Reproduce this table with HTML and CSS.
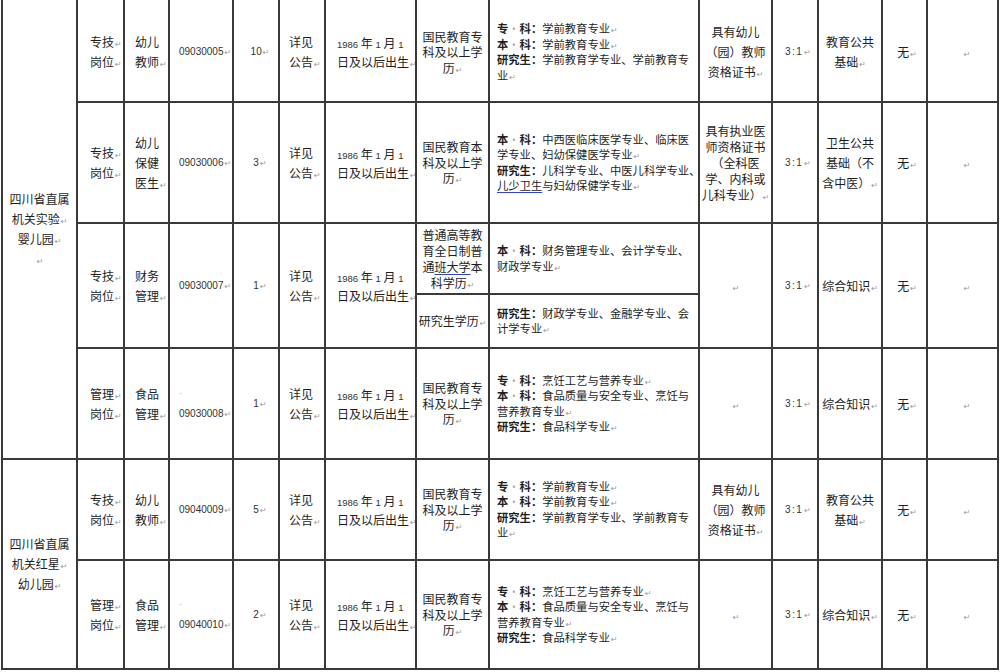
FILE: index.html
```html
<!DOCTYPE html>
<html lang="zh-CN">
<head>
<meta charset="utf-8">
<title>岗位表</title>
<link rel="stylesheet" href="styles.css">
</head>
<body>
<table class="jobs">
<colgroup>
<col class="w-unit"><col class="w-type"><col class="w-name"><col class="w-code"><col class="w-num"><col class="w-cond"><col class="w-age"><col class="w-edu"><col class="w-major"><col class="w-cert"><col class="w-ratio"><col class="w-exam"><col class="w-other"><col class="w-note">
</colgroup>
<tbody>
<tr class="r1">
<td rowspan="5" class="unit">四川省直属<br>机关实验<span class="p">↵</span><br>婴儿园<span class="p">↵</span><br><span class="p">↵</span></td>
<td class="type">专技<span class="p">↵</span><br>岗位<span class="p">↵</span></td>
<td class="name">幼儿<br>教师<span class="p">↵</span></td>
<td class="code">09030005<span class="p">↵</span></td>
<td class="num">10<span class="p">↵</span></td>
<td class="cond">详见<br>公告<span class="p">↵</span></td>
<td class="age"><span class="n">1986</span> 年 <span class="n">1</span> 月 <span class="n">1</span><br>日及以后出生<span class="p">↵</span></td>
<td class="edu">国民教育专<br>科及以上学<br>历<span class="p">↵</span></td>
<td class="major"><b>专<span class="sp">·</span>科：</b>学前教育专业<span class="p">↵</span><br><b>本<span class="sp">·</span>科：</b>学前教育专业<span class="p">↵</span><br><b>研究生：</b>学前教育学专业、学前教育专<br>业<span class="p">↵</span></td>
<td class="cert">具有幼儿<br>（园）教师<br>资格证书<span class="p">↵</span></td>
<td class="ratio">3:1<span class="p">↵</span></td>
<td class="exam">教育公共<br>基础<span class="p">↵</span></td>
<td class="other">无<span class="p">↵</span></td>
<td class="note"><span class="p">↵</span></td>
</tr>
<tr class="r2">
<td class="type">专技<span class="p">↵</span><br>岗位<span class="p">↵</span></td>
<td class="name">幼儿<br>保健<br>医生<span class="p">↵</span></td>
<td class="code">09030006<span class="p">↵</span></td>
<td class="num">3<span class="p">↵</span></td>
<td class="cond">详见<br>公告<span class="p">↵</span></td>
<td class="age"><span class="n">1986</span> 年 <span class="n">1</span> 月 <span class="n">1</span><br>日及以后出生<span class="p">↵</span></td>
<td class="edu">国民教育本<br>科及以上学<br>历<span class="p">↵</span></td>
<td class="major"><b>本<span class="sp">·</span>科：</b>中西医临床医学专业、临床医<br>学专业、妇幼保健医学专业<span class="p">↵</span><br><b>研究生：</b>儿科学专业、中医儿科学专业、<br><span class="gm">儿少卫生</span>与妇幼保健学专业<span class="p">↵</span></td>
<td class="cert tight">具有执业医<br>师资格证书<br>（全科医<br>学、内科或<br>儿科专业）<span class="p">↵</span></td>
<td class="ratio">3:1<span class="p">↵</span></td>
<td class="exam">卫生公共<br>基础（不<br>含中医）<span class="p">↵</span></td>
<td class="other">无<span class="p">↵</span></td>
<td class="note"><span class="p">↵</span></td>
</tr>
<tr class="r3a">
<td rowspan="2" class="type">专技<span class="p">↵</span><br>岗位<span class="p">↵</span></td>
<td rowspan="2" class="name">财务<br>管理<span class="p">↵</span></td>
<td rowspan="2" class="code">09030007<span class="p">↵</span></td>
<td rowspan="2" class="num">1<span class="p">↵</span></td>
<td rowspan="2" class="cond">详见<br>公告<span class="p">↵</span></td>
<td rowspan="2" class="age"><span class="n">1986</span> 年 <span class="n">1</span> 月 <span class="n">1</span><br>日及以后出生<span class="p">↵</span></td>
<td class="edu tight">普通高等教<br>育全日制普<br>通<span class="gm">班大学</span>本<br>科学历<span class="p">↵</span></td>
<td class="major"><b>本<span class="sp">·</span>科：</b>财务管理专业、会计学专业、<br>财政学专业<span class="p">↵</span></td>
<td rowspan="2" class="cert"><span class="p">↵</span></td>
<td rowspan="2" class="ratio">3:1<span class="p">↵</span></td>
<td rowspan="2" class="exam">综合知识<span class="p">↵</span></td>
<td rowspan="2" class="other">无<span class="p">↵</span></td>
<td rowspan="2" class="note"><span class="p">↵</span></td>
</tr>
<tr class="r3b">
<td class="edu">研究生学历<span class="p">↵</span></td>
<td class="major"><b>研究生：</b>财政学专业、金融学专业、会<br>计学专业<span class="p">↵</span></td>
</tr>
<tr class="r4">
<td class="type">管理<span class="p">↵</span><br>岗位<span class="p">↵</span></td>
<td class="name">食品<br>管理<span class="p">↵</span></td>
<td class="code"><span class="dot">·</span><br>09030008<span class="p">↵</span></td>
<td class="num">1<span class="p">↵</span></td>
<td class="cond">详见<br>公告<span class="p">↵</span></td>
<td class="age"><span class="n">1986</span> 年 <span class="n">1</span> 月 <span class="n">1</span><br>日及以后出生<span class="p">↵</span></td>
<td class="edu">国民教育专<br>科及以上学<br>历<span class="p">↵</span></td>
<td class="major"><b>专<span class="sp">·</span>科：</b>烹饪工艺与营养专业<span class="p">↵</span><br><b>本<span class="sp">·</span>科：</b>食品质量与安全专业、烹饪与<br>营养教育专业<span class="p">↵</span><br><b>研究生：</b>食品科学专业<span class="p">↵</span></td>
<td class="cert"><span class="p">↵</span></td>
<td class="ratio">3:1<span class="p">↵</span></td>
<td class="exam">综合知识<span class="p">↵</span></td>
<td class="other">无<span class="p">↵</span></td>
<td class="note"><span class="p">↵</span></td>
</tr>
<tr class="r5">
<td rowspan="2" class="unit">四川省直属<br>机关红星<span class="p">↵</span><br>幼儿园<span class="p">↵</span></td>
<td class="type">专技<span class="p">↵</span><br>岗位<span class="p">↵</span></td>
<td class="name">幼儿<br>教师<span class="p">↵</span></td>
<td class="code">09040009<span class="p">↵</span></td>
<td class="num">5<span class="p">↵</span></td>
<td class="cond">详见<br>公告<span class="p">↵</span></td>
<td class="age"><span class="n">1986</span> 年 <span class="n">1</span> 月 <span class="n">1</span><br>日及以后出生<span class="p">↵</span></td>
<td class="edu">国民教育专<br>科及以上学<br>历<span class="p">↵</span></td>
<td class="major"><b>专<span class="sp">·</span>科：</b>学前教育专业<span class="p">↵</span><br><b>本<span class="sp">·</span>科：</b>学前教育专业<span class="p">↵</span><br><b>研究生：</b>学前教育学专业、学前教育专<br>业<span class="p">↵</span></td>
<td class="cert">具有幼儿<br>（园）教师<br>资格证书<span class="p">↵</span></td>
<td class="ratio">3:1<span class="p">↵</span></td>
<td class="exam">教育公共<br>基础<span class="p">↵</span></td>
<td class="other">无<span class="p">↵</span></td>
<td class="note"><span class="p">↵</span></td>
</tr>
<tr class="r6">
<td class="type">管理<span class="p">↵</span><br>岗位<span class="p">↵</span></td>
<td class="name">食品<br>管理<span class="p">↵</span></td>
<td class="code"><span class="dot">·</span><br>09040010<span class="p">↵</span></td>
<td class="num">2<span class="p">↵</span></td>
<td class="cond">详见<br>公告<span class="p">↵</span></td>
<td class="age"><span class="n">1986</span> 年 <span class="n">1</span> 月 <span class="n">1</span><br>日及以后出生<span class="p">↵</span></td>
<td class="edu">国民教育专<br>科及以上学<br>历<span class="p">↵</span></td>
<td class="major"><b>专<span class="sp">·</span>科：</b>烹饪工艺与营养专业<span class="p">↵</span><br><b>本<span class="sp">·</span>科：</b>食品质量与安全专业、烹饪与<br>营养教育专业<span class="p">↵</span><br><b>研究生：</b>食品科学专业<span class="p">↵</span></td>
<td class="cert"><span class="p">↵</span></td>
<td class="ratio">3:1<span class="p">↵</span></td>
<td class="exam">综合知识<span class="p">↵</span></td>
<td class="other">无<span class="p">↵</span></td>
<td class="note"><span class="p">↵</span></td>
</tr>
</tbody>
</table>
</body>
</html>
```

FILE: styles.css
```css
html, body {
  margin: 0;
  padding: 0;
  background: #ffffff;
}

body {
  font-family: "Noto Sans CJK SC", "Liberation Sans", sans-serif;
  font-size: 12px;
  color: #1e1e1e;
  overflow: hidden;
  height: 672px;
}

.jobs {
  border-collapse: collapse;
  table-layout: fixed;
  width: 996px;
  margin: -2px 0 0 1px;
}

.jobs td {
  border: 2px solid #3a3a3a;
  padding: 0;
  vertical-align: middle;
  white-space: nowrap;
  line-height: 20px;
  overflow: hidden;
}

.w-unit { width: 75px; }
.w-type { width: 47px; }
.w-name { width: 45px; }
.w-code { width: 64px; }
.w-num { width: 46px; }
.w-cond { width: 46px; }
.w-age { width: 91px; }
.w-edu { width: 73px; }
.w-major { width: 210px; }
.w-cert { width: 73px; }
.w-ratio { width: 46px; }
.w-exam { width: 64px; }
.w-other { width: 45px; }
.w-note { width: 71px; }

.r1 { height: 103px; }
.r2 { height: 121px; }
.r3a { height: 71px; }
.r3b { height: 54px; }
.r4 { height: 111px; }
.r5 { height: 101px; }
.r6 { height: 109px; }

.jobs .r1 td { padding-top: 3px; }
.jobs .r1 td.unit { padding-top: 0; }

.jobs .unit { text-align: center; }
.jobs .type { padding-left: 12px; }
.jobs .name { padding-left: 10px; }
.jobs .code {
  padding-left: 9px;
  font-family: "Liberation Sans", sans-serif;
  font-size: 10px;
  color: #333;
}
.jobs .num {
  text-align: center;
  padding-left: 8px;
  font-family: "Liberation Sans", sans-serif;
  font-size: 10px;
  color: #333;
}
.jobs .cond { padding-left: 9px; }
.jobs .age { padding-left: 11px; line-height: 19px; }
.n {
  font-family: "Liberation Sans", sans-serif;
  font-size: 9.5px;
  color: #333;
  line-height: 0;
}
.jobs .edu { text-align: center; line-height: 15.5px; }
.jobs .major {
  padding-left: 7px;
  font-size: 11.3px;
  line-height: 15.5px;
}
.major b { font-weight: 700; }
.sp {
  display: inline-block;
  width: 11.3px;
  text-align: center;
  color: #aaa;
  font-weight: 400;
}
.jobs .cert { text-align: center; }
.jobs .tight { line-height: 16px; }
.jobs .ratio {
  text-align: center;
  padding-left: 6px;
  font-family: "Liberation Sans", sans-serif;
  font-size: 10px;
  letter-spacing: 1.5px;
  color: #333;
}
.jobs .exam { text-align: center; }
.jobs .other { text-align: center; padding-left: 5px; }
.jobs .note { text-align: center; padding-left: 8px; }

.p {
  font-family: "DejaVu Sans", sans-serif;
  font-size: 8px;
  font-weight: 400;
  color: #9a9a9a;
  margin-left: 1px;
  line-height: 0;
  letter-spacing: 0;
}
.dot { color: #bbb; }
.gm {
  text-decoration: underline;
  text-decoration-color: #3346c8;
  text-underline-offset: 2px;
}
```
